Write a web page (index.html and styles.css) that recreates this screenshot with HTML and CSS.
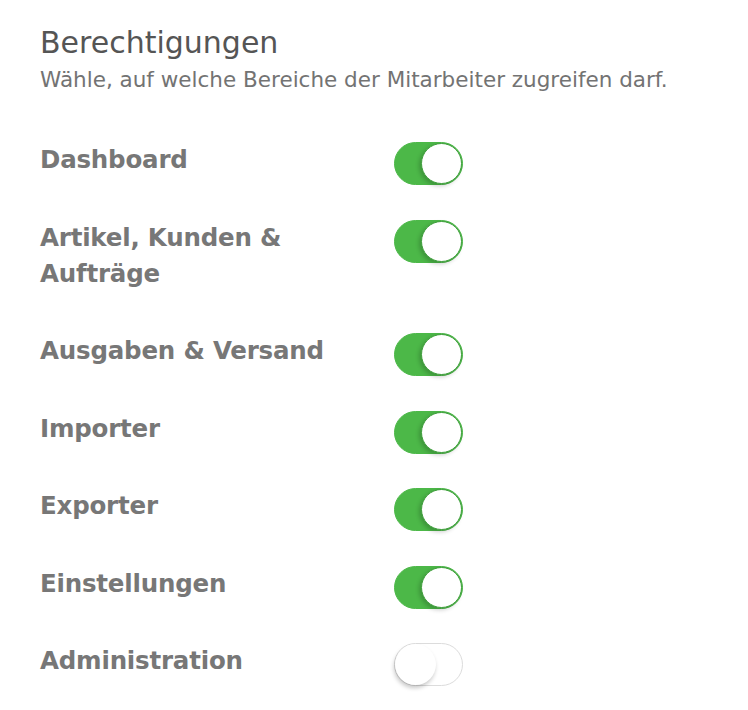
FILE: index.html
```html
<!DOCTYPE html>
<html lang="de">
<head>
    <meta charset="UTF-8">
    <meta name="viewport" content="width=device-width, initial-scale=1.0">
    <title>Berechtigungen</title>
    <link rel="stylesheet" href="styles.css">
</head>
<body>

    <div class="permissions">
        <h2 class="title">Berechtigungen</h2>
        <p class="subtitle">Wähle, auf welche Bereiche der Mitarbeiter zugreifen darf.</p>

        <div class="perm-list">
            <div class="perm-row">
                <span class="perm-label">Dashboard</span>
                <span class="switch on"><span class="knob"></span></span>
            </div>
            <div class="perm-row">
                <span class="perm-label">Artikel, Kunden &amp; Aufträge</span>
                <span class="switch on"><span class="knob"></span></span>
            </div>
            <div class="perm-row">
                <span class="perm-label">Ausgaben &amp; Versand</span>
                <span class="switch on"><span class="knob"></span></span>
            </div>
            <div class="perm-row">
                <span class="perm-label">Importer</span>
                <span class="switch on"><span class="knob"></span></span>
            </div>
            <div class="perm-row">
                <span class="perm-label">Exporter</span>
                <span class="switch on"><span class="knob"></span></span>
            </div>
            <div class="perm-row">
                <span class="perm-label">Einstellungen</span>
                <span class="switch on"><span class="knob"></span></span>
            </div>
            <div class="perm-row">
                <span class="perm-label">Administration</span>
                <span class="switch"><span class="knob"></span></span>
            </div>
        </div>
    </div>

</body>
</html>
```

FILE: styles.css
```css
body {
    margin: 0;
    background: #ffffff;
    font-family: "DejaVu Sans", "Open Sans", sans-serif;
}

.permissions {
    padding: 22px 40px;
}

.title {
    margin: 0;
    font-size: 30px;
    font-weight: 400;
    line-height: 42px;
    color: #555555;
}

.subtitle {
    margin: 0;
    font-size: 21.5px;
    line-height: 32px;
    color: #737373;
}

.perm-list {
    display: flex;
    flex-direction: column;
    gap: 41.5px;
    margin-top: 46px;
}

.perm-row {
    display: flex;
    align-items: flex-start;
}

.perm-label {
    box-sizing: border-box;
    width: 354px;
    padding-right: 50px;
    font-size: 24.5px;
    font-weight: 700;
    line-height: 36px;
    letter-spacing: -0.2px;
    color: #777777;
}

/* Schalter */
.switch {
    position: relative;
    box-sizing: border-box;
    width: 69px;
    height: 43px;
    margin-bottom: -7px;
    border-radius: 22px;
    border: 1px solid #dcdcdc;
    background: #ffffff;
}

.switch.on {
    background: #4cb848;
    border-color: #4cb848;
}

.knob {
    position: absolute;
    top: 0;
    left: 0;
    box-sizing: border-box;
    width: 41px;
    height: 41px;
    border-radius: 50%;
    background: #ffffff;
    box-shadow: -1px 3px 4px rgba(0, 0, 0, 0.22);
}

.switch.on .knob {
    left: 26px;
    border: 1px solid #3f9f3c;
    box-shadow: -2px 2px 4px rgba(0, 0, 0, 0.2);
}
```
